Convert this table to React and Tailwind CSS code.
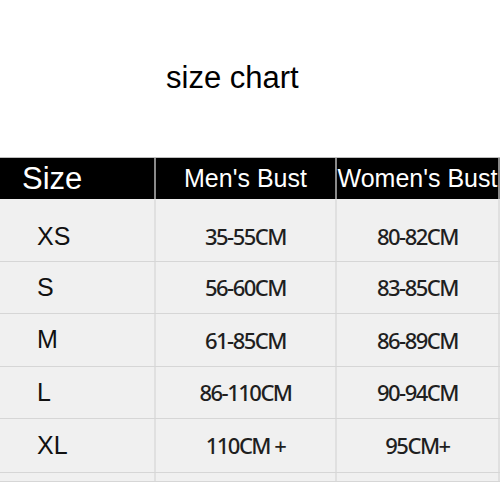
const rows = [
  { size: "XS", men: "35-55CM", women: "80-82CM", h: "h-[63px]", pad: "pt-[13px]" },
  { size: "S", men: "56-60CM", women: "83-85CM", h: "h-[52px]", pad: "" },
  { size: "M", men: "61-85CM", women: "86-89CM", h: "h-[53px]", pad: "" },
  { size: "L", men: "86-110CM", women: "90-94CM", h: "h-[52px]", pad: "" },
  { size: "XL", men: "110CM +", women: "95CM+", h: "h-[54px]", pad: "" },
];

const arial = "font-['Liberation_Sans',Arial,sans-serif]";
const yahei = "font-['Noto_Sans',sans-serif]";

export default function App() {
  return (
    <div className="w-[500px] h-[500px] bg-white overflow-hidden">
      {/* title */}
      <div className="h-[157px] pl-[166px] pt-[62px]">
        <h1 className={`${arial} text-[31px] leading-[31px] text-black`}>size chart</h1>
      </div>

      {/* header */}
      <div className="h-[1px] bg-[#bdbdbd]" />
      <div className="flex h-[41px] bg-black text-white">
        <div className={`${arial} w-[154px] flex items-center pl-[22px] text-[31px] leading-[31px]`}>
          Size
        </div>
        <div className="w-[2px] bg-[#8a8a8a]" />
        <div className={`${arial} w-[179px] flex items-center justify-center text-[25px] leading-[25px]`}>
          Men's Bust
        </div>
        <div className="w-[2px] bg-[#8a8a8a]" />
        <div className={`${arial} w-[161px] flex items-center justify-center text-[25px] leading-[25px] whitespace-nowrap`}>
          Women's Bust
        </div>
        <div className="w-[2px] bg-[#8a8a8a]" />
        <div className="flex-1" />
      </div>

      {/* body */}
      <div className="bg-[#f0f0f0]">
        {rows.map((r) => (
          <div key={r.size} className={`flex ${r.h} border-b border-[#d6d6d6]`}>
            <div className={`${arial} ${r.pad} w-[154px] flex items-center pl-[37px] text-[25px] text-[#111] font-medium`}>
              {r.size}
            </div>
            <div className="w-[2px] bg-[#e0e0e0]" />
            <div className={`${yahei} ${r.pad} w-[179px] flex items-center justify-center text-[22px] font-medium tracking-[-1.5px] text-[#1f1f1f]`}>
              {r.men}
            </div>
            <div className="w-[2px] bg-[#e0e0e0]" />
            <div className={`${yahei} ${r.pad} w-[161px] flex items-center justify-center text-[22px] font-medium tracking-[-1.5px] text-[#1f1f1f]`}>
              {r.women}
            </div>
            <div className="w-[2px] bg-[#e0e0e0]" />
            <div className="flex-1" />
          </div>
        ))}
        <div className="flex h-[9px] border-b border-[#d6d6d6]">
          <div className="w-[154px]" />
          <div className="w-[2px] bg-[#e0e0e0]" />
          <div className="w-[179px]" />
          <div className="w-[2px] bg-[#e0e0e0]" />
          <div className="w-[161px]" />
          <div className="w-[2px] bg-[#e0e0e0]" />
        </div>
      </div>
    </div>
  );
}
